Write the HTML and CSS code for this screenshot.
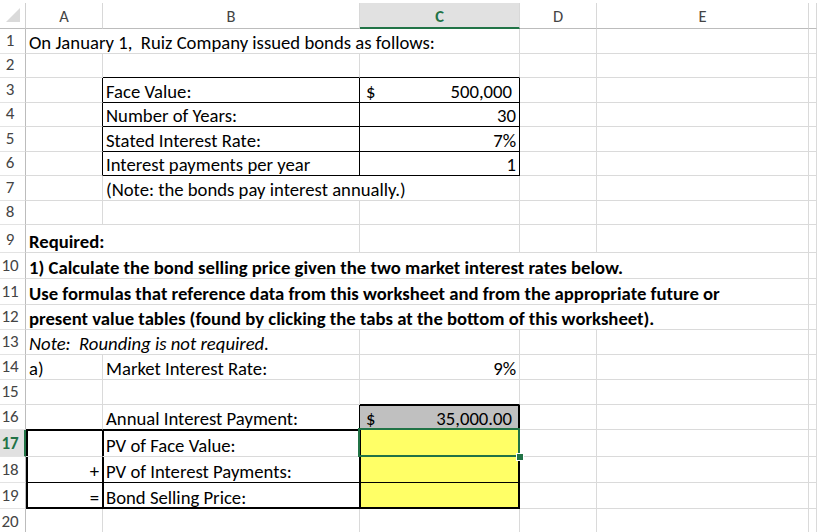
FILE: index.html
```html
<!DOCTYPE html>
<html lang="en">
<head>
<meta charset="utf-8">
<title>Bond Selling Price</title>
<link rel="stylesheet" href="styles.css">
</head>
<body>
<div class="sheet">
  <div class="row hdr">
    <div class="corner"><svg width="25" height="25" viewBox="0 0 25 25"><polygon points="20,5 20,19 6,19" fill="#dadada"/></svg></div>
    <div class="ch">A</div>
    <div class="ch">B</div>
    <div class="ch sel">C</div>
    <div class="ch">D</div>
    <div class="ch">E</div>
    <div class="ch"></div>
  </div>

  <div class="row h25">
    <div class="rh">1</div>
    <div class="c span3 pre">On January 1,  Ruiz Company issued bonds as follows:</div>
    <div class="c"></div><div class="c"></div><div class="c"></div>
  </div>
  <div class="row h24">
    <div class="rh">2</div>
    <div class="c"></div><div class="c bb"></div><div class="c bb"></div>
    <div class="c"></div><div class="c"></div><div class="c"></div>
  </div>
  <div class="row h25">
    <div class="rh">3</div>
    <div class="c br"></div>
    <div class="c br bb">Face Value:</div>
    <div class="c br bb acct"><span>$</span><span class="amt">500,000</span></div>
    <div class="c"></div><div class="c"></div><div class="c"></div>
  </div>
  <div class="row h24">
    <div class="rh">4</div>
    <div class="c br"></div>
    <div class="c br bb">Number of Years:</div>
    <div class="c br bb num">30</div>
    <div class="c"></div><div class="c"></div><div class="c"></div>
  </div>
  <div class="row h25">
    <div class="rh">5</div>
    <div class="c br"></div>
    <div class="c br bb">Stated Interest Rate:</div>
    <div class="c br bb num">7%</div>
    <div class="c"></div><div class="c"></div><div class="c"></div>
  </div>
  <div class="row h24">
    <div class="rh">6</div>
    <div class="c br"></div>
    <div class="c br bb">Interest payments per year</div>
    <div class="c br bb num">1</div>
    <div class="c"></div><div class="c"></div><div class="c"></div>
  </div>
  <div class="row h25">
    <div class="rh">7</div>
    <div class="c"></div>
    <div class="c span2">(Note: the bonds pay interest annually.)</div>
    <div class="c"></div><div class="c"></div><div class="c"></div>
  </div>
  <div class="row h24">
    <div class="rh">8</div>
    <div class="c"></div><div class="c"></div><div class="c"></div>
    <div class="c"></div><div class="c"></div><div class="c"></div>
  </div>
  <div class="row h28">
    <div class="rh">9</div>
    <div class="c span2 bold">Required:</div>
    <div class="c"></div><div class="c"></div><div class="c"></div><div class="c"></div>
  </div>
  <div class="row h26">
    <div class="rh">10</div>
    <div class="c span5 bold">1) Calculate the bond selling price given the two market interest rates below.</div>
    <div class="c"></div>
  </div>
  <div class="row h26">
    <div class="rh">11</div>
    <div class="c span5 bold">Use formulas that reference data from this worksheet and from the appropriate future or</div>
    <div class="c"></div>
  </div>
  <div class="row h25">
    <div class="rh">12</div>
    <div class="c span5 bold">present value tables (found by clicking the tabs at the bottom of this worksheet).</div>
    <div class="c"></div>
  </div>
  <div class="row h25">
    <div class="rh">13</div>
    <div class="c span2 ital pre">Note:  Rounding is not required.</div>
    <div class="c"></div><div class="c"></div><div class="c"></div><div class="c"></div>
  </div>
  <div class="row h25">
    <div class="rh">14</div>
    <div class="c">a)</div>
    <div class="c">Market Interest Rate:</div>
    <div class="c num">9%</div>
    <div class="c"></div><div class="c"></div><div class="c"></div>
  </div>
  <div class="row h25">
    <div class="rh">15</div>
    <div class="c"></div><div class="c"></div><div class="c bb"></div>
    <div class="c"></div><div class="c"></div><div class="c"></div>
  </div>
  <div class="row h25">
    <div class="rh">16</div>
    <div class="c bb"></div>
    <div class="c bb br">Annual Interest Payment:</div>
    <div class="c bb br acct gray mt mr"><span>$</span><span class="amt">35,000.00</span></div>
    <div class="c"></div><div class="c"></div><div class="c"></div>
  </div>
  <div class="row h27">
    <div class="rh sel">17</div>
    <div class="c br ml2 mt"></div>
    <div class="c br ml mt">PV of Face Value:</div>
    <div class="c br yellow ml mr active"><div class="selbox"></div><div class="handle"></div></div>
    <div class="c"></div><div class="c"></div><div class="c"></div>
  </div>
  <div class="row h26">
    <div class="rh">18</div>
    <div class="c br bb ml2 num">+</div>
    <div class="c br bb ml">PV of Interest Payments:</div>
    <div class="c br bb yellow ml mr"></div>
    <div class="c"></div><div class="c"></div><div class="c"></div>
  </div>
  <div class="row h26">
    <div class="rh">19</div>
    <div class="c br bb ml2 mb num">=</div>
    <div class="c br bb ml mb">Bond Selling Price:</div>
    <div class="c br bb yellow ml mr mb"></div>
    <div class="c"></div><div class="c"></div><div class="c"></div>
  </div>
  <div class="row h26">
    <div class="rh">20</div>
    <div class="c"></div><div class="c"></div><div class="c"></div>
    <div class="c"></div><div class="c"></div><div class="c"></div>
  </div>
</div>
</body>
</html>
```
FILE: styles.css
```css
html, body {
  margin: 0;
  padding: 0;
  background: #ffffff;
}
body {
  width: 817px;
  height: 532px;
  overflow: hidden;
  font-family: Carlito, Calibri, Lato, sans-serif;
}
.sheet {
  padding-top: 3px;
}
.row {
  display: grid;
  grid-template-columns: 26px 77px 257px 160px 77px 212px 1fr;
}
.hdr { height: 26px; }
.h24 { height: 24px; }
.h25 { height: 25px; }
.h26 { height: 26px; }
.h27 { height: 27px; }
.h28 { height: 28px; }

.corner {
  border-right: 1px solid #d0d0d0;
  border-bottom: 1px solid #bcbcbc;
  overflow: hidden;
}
.corner svg { display: block; }
.ch {
  display: flex;
  align-items: center;
  justify-content: center;
  border-right: 1px solid #d8d8d8;
  border-bottom: 1px solid #bcbcbc;
  font-size: 16.5px;
  color: #444;
  padding-top: 1px;
}
.ch.sel {
  background: #e1e1e1;
  color: #217346;
  font-weight: bold;
  border-bottom: 2px solid #217346;
  padding-top: 2px;
}
.rh {
  display: flex;
  align-items: flex-end;
  justify-content: center;
  padding-right: 5px;
  padding-bottom: 2px;
  border-right: 1px solid #bcbcbc;
  border-bottom: 1px solid #e3e3e3;
  font-size: 17px;
  line-height: 20px;
  color: #444;
}
.rh.sel {
  background: #e1e1e1;
  color: #217346;
  font-weight: bold;
  border-right: 2px solid #217346;
  padding-right: 4px;
}

.c {
  --mt: 0px;
  --ml: 0px;
  --mr: 0px;
  --mb: 0px;
  display: flex;
  align-items: flex-end;
  min-width: 0;
  padding: 0 3px 0 3px;
  border-right: 1px solid #dadada;
  border-bottom: 1px solid #dadada;
  font-size: 18.7px;
  line-height: 21px;
  color: #000;
  white-space: nowrap;
  box-shadow:
    inset 0 var(--mt) 0 #000,
    inset var(--ml) 0 0 #000,
    inset calc(-1 * var(--mr)) 0 0 #000,
    inset 0 calc(-1 * var(--mb)) 0 #000;
}
.span2 { grid-column: span 2; }
.span3 { grid-column: span 3; }
.span5 { grid-column: span 5; }
.pre { white-space: pre; }
.bold { font-weight: bold; }
.ital { font-style: italic; }
.num { justify-content: flex-end; }
.acct {
  justify-content: space-between;
  padding-left: 6px;
  padding-right: 7px;
}
.br { border-right-color: #000; }
.bb { border-bottom-color: #000; }
.mt { --mt: 1px; }
.ml { --ml: 1px; }
.ml2 { --ml: 2px; }
.mr { --mr: 1px; }
.mb { --mb: 1px; }
.gray { background: #c0c0c0; }
.yellow { background: #ffff66; }
.active { position: relative; }
.selbox {
  position: absolute;
  left: -2px;
  top: -2px;
  right: -1px;
  bottom: -1px;
  border: 2px solid #217346;
  pointer-events: none;
}
.handle {
  position: absolute;
  right: -5px;
  bottom: -5px;
  width: 6px;
  height: 6px;
  background: #217346;
  border: 1px solid #ffffff;
}
```
